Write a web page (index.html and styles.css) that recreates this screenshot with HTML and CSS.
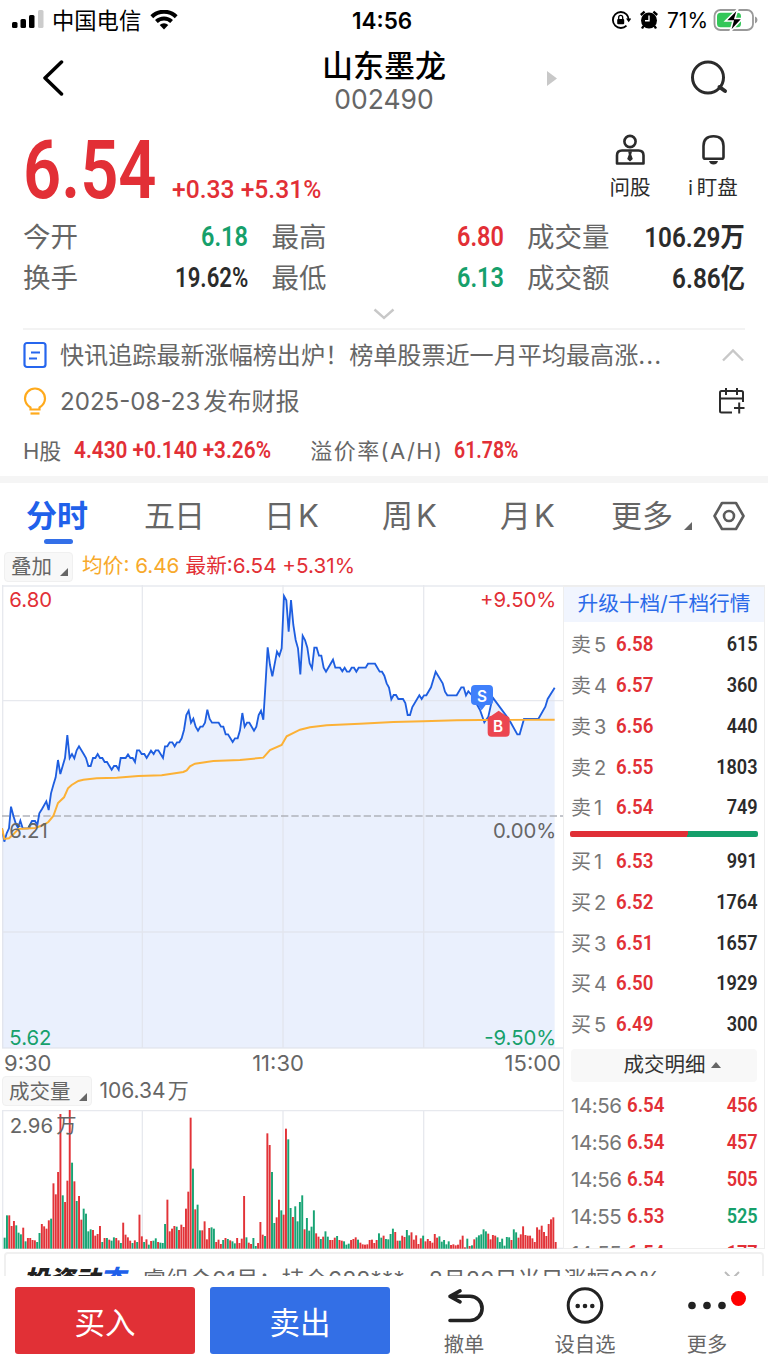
FILE: index.html
```html
<!DOCTYPE html>
<html lang="zh-CN">
<head>
  <meta charset="UTF-8">
  <meta name="viewport" content="width=device-width, initial-scale=1.0">
  <title>山东墨龙 002490</title>
  <link rel="stylesheet" href="styles.css">
</head>
<body>
  <div class="status">
    <svg class="signal" width="34" height="20" viewBox="0 0 34 20">
      <rect x="0" y="12" width="5.500" height="6" rx="1.500"/>
      <rect x="8.500" y="9" width="5.500" height="9" rx="1.500"/>
      <rect x="17" y="5" width="5.500" height="13" rx="1.500"/>
      <rect x="26" y="0" width="5.500" height="18" rx="1.500" fill="#ccc"/>
    </svg>
    <span class="carrier">中国电信</span>
    <svg class="wifi" width="28" height="20" viewBox="0 0 28 20">
      <path d="M1.800 6.700a17.400 17.400 0 0 1 24.400 0M6.400 11.500a11 11 0 0 1 15.200 0" fill="none" stroke="#000" stroke-width="4"/>
      <path d="M14 19.500l-4.300-4.500a6.200 6.200 0 0 1 8.600 0z"/>
    </svg>
    <span class="clock">14:56</span>
    <div class="status-right">
      <svg width="20" height="20" viewBox="0 0 20 20">
        <path d="M15.500 4.300A8 8 0 1 0 15.500 15.700M15.500 4.300Q17.500 6.500 17.500 9" fill="none" stroke="#000" stroke-width="1.800"/>
        <path d="M15 8.500h5.400l-2.700 3.800z"/>
        <rect x="6.200" y="9" width="7" height="5.200" rx="1"/>
        <path d="M7.700 9.500V7.400a2 2 0 0 1 4 0v2.100" fill="none" stroke="#000" stroke-width="1.300"/>
      </svg>
      <svg width="20" height="20" viewBox="0 0 20 20">
        <circle cx="10" cy="10.500" r="8"/>
        <path d="M1.800 5l3.800-3.300M18.200 5l-3.800-3.300M4.500 16l-1.500 2.500M15.500 16l1.500 2.500" stroke="#000" stroke-width="2.400"/>
        <path d="M10 5.400v5.400H6" fill="none" stroke="#fff" stroke-width="1.400"/>
      </svg>
      <span class="percent">71%</span>
      <svg width="45" height="26" viewBox="0 0 45 26">
        <rect x="1.500" y="3" width="38.500" height="20" rx="6" fill="#fff" stroke="#999" stroke-width="1.800"/>
        <rect x="4" y="5.800" width="24" height="14.500" rx="3.500" fill="#34c759"/>
        <path d="M42 9.500q2.500.8 2.500 3.500T42 16.500z" fill="#999"/>
        <path d="M25 1.500l-12.500 12.500h7.500L17 25 29.500 11.500h-7.500z" stroke="#fff" stroke-width="1.600"/>
      </svg>
    </div>
  </div>

  <div class="nav">
    <svg class="back" width="22" height="36" viewBox="0 0 22 36"><path d="M19.500 2L3 18l16.500 16" fill="none" stroke="#000" stroke-width="3.500" stroke-linecap="round" stroke-linejoin="round"/></svg>
    <div class="title">
      <h1>山东墨龙</h1>
      <p>002490</p>
    </div>
    <svg class="next" width="10" height="15" viewBox="0 0 10 15"><path d="M0 0l10 7.500L0 15z" fill="#c8c8c8"/></svg>
    <svg class="search" width="38" height="36" viewBox="0 0 38 36"><circle cx="18" cy="17.500" r="15.500" fill="none" stroke="#2b2b2b" stroke-width="3"/><path d="M29.500 27l5.500 4" stroke="#2b2b2b" stroke-width="4" stroke-linecap="round"/></svg>
  </div>

  <div class="quote">
    <span class="price">6.54</span>
    <span class="change">+0.33 +5.31%</span>
    <div class="tool ask">
      <svg width="30" height="32" viewBox="0 0 30 32" fill="none" stroke="#2b2b2b" stroke-width="2.600">
        <circle cx="15" cy="7.500" r="5.600"/>
        <path d="M2 29.500V21.500Q2 16.500 7 16.500h16.500q5 0 5 5v8z" stroke-linejoin="round"/>
        <path d="M13.200 17.500h3.800l-.8 3 1.600 4.500L15 27.500l-2.800-2.500 1.600-4.500z" fill="#2b2b2b" stroke="none"/>
      </svg>
      <span>问股</span>
    </div>
    <div class="tool watch">
      <svg width="30" height="32" viewBox="0 0 30 32">
        <path d="M5.500 23V12q0-9.800 10-9.800t10 9.800V23q0 1.800-1.800 1.800H7.300Q5.500 24.800 5.500 23z" fill="none" stroke="#2b2b2b" stroke-width="2.600"/>
        <path d="M11 27h9q-1 3.500-4.500 3.500T11 27z" fill="#2b2b2b"/>
      </svg>
      <span><small>i</small>盯盘</span>
    </div>
  </div>

  <div class="stats">
    <div class="stat"><span>今开</span><b class="green">6.18</b></div>
    <div class="stat"><span>最高</span><b class="red">6.80</b></div>
    <div class="stat"><span>成交量</span><b class="wide">106.29万</b></div>
    <div class="stat"><span>换手</span><b class="narrow">19.62%</b></div>
    <div class="stat"><span>最低</span><b class="green">6.13</b></div>
    <div class="stat"><span>成交额</span><b class="wide">6.86亿</b></div>
  </div>
  <div class="expand">
    <svg width="22" height="12" viewBox="0 0 22 12"><path d="M1.500 1.500L11 10l9.500-8.500" fill="none" stroke="#c8c8c8" stroke-width="2.400"/></svg>
  </div>

  <div class="news">
    <div class="news-row">
      <svg width="24" height="28" viewBox="0 0 24 28" fill="none" stroke="#2666ee" stroke-width="2.200">
        <rect x="1.500" y="2" width="21" height="24" rx="2.500"/>
        <path d="M8 11.500h9M6 17.500h8"/>
      </svg>
      <p>快讯追踪最新涨幅榜出炉！榜单股票近一月平均最高涨<span class="dots">...</span></p>
      <svg width="24" height="14" viewBox="0 0 24 14"><path d="M2 12.500L12 2.500l10 10" fill="none" stroke="#c8c8c8" stroke-width="2.400"/></svg>
    </div>
    <div class="news-row report">
      <svg width="24" height="28" viewBox="0 0 24 28" fill="none" stroke="#ffaa1c" stroke-width="2.200">
        <path d="M7.500 22.500v-2Q2 17 2 11.500a10 10 0 0 1 20 0q0 5.500-5.500 9v2z"/>
        <path d="M7.500 26.500h9"/>
      </svg>
      <p>2025-08-23<span class="k">发布财报</span></p>
      <svg width="27" height="28" viewBox="0 0 27 28" fill="none" stroke="#2b2b2b" stroke-width="2">
        <path d="M25 15V5.500Q25 4 23.500 4h-20Q2 4 2 5.500v18.500Q2 25.500 3.500 25.500H14"/>
        <path d="M2 11.500h23M8 1v7M19 1v7M16 21h10.500M21.200 15.500v11"/>
      </svg>
    </div>
    <div class="news-row h-share">
      <span>H股</span><b class="h-price">4.430 +0.140 +3.26%</b>
      <span class="premium">溢价率(A/H)</span><b class="h-rate">61.78%</b>
    </div>
  </div>

  <div class="tabs">
    <span class="tab active">分时</span>
    <span class="tab">五日</span>
    <span class="tab period">日<span class="k">K</span></span>
    <span class="tab period">周<span class="k">K</span></span>
    <span class="tab period">月<span class="k">K</span></span>
    <span class="tab more">更多<i class="corner"></i></span>
    <svg width="32" height="30" viewBox="0 0 32 30" fill="none" stroke="#5c5c5c" stroke-width="2.600"><path d="M9 2h14l7.500 13L23 28H9L1.500 15z" stroke-linejoin="round"/><circle cx="16" cy="15" r="5"/></svg>
  </div>

  <div class="info">
    <span class="chip">叠加<i class="corner"></i></span>
    <span class="avg">均价: 6.46</span>
    <span class="red">最新:6.54 +5.31%</span>
  </div>

  <div class="main">
    <div class="charts">
      <!-- 分时走势 -->
      <svg class="trend" viewBox="6 0 1683 1392" preserveAspectRatio="none">
        <path class="area" d=""/>
        <path class="grid" d="M8 0V1389M427 0V1389M849 0V1389M1271 0V1389M6 3H1689M6 347H1689M6 1041H1689M6 1389H1689"/>
        <path class="base" d="M6 693H1689"/>
        <polyline class="line" points="6,730 13,770 20,745 27,730 33,665 41,695 48,718 54,728 61,707 68,730 84,730 96,708 105,708 112,720 118,685 126,672 139,649 146,675 153,625 160,600 167,577 174,525 181,567 188,543 195,519 202,450 209,519 216,507 223,520 230,496 237,484 251,507 258,519 265,543 272,543 279,519 286,519 293,507 300,519 307,519 314,531 321,531 335,554 342,543 349,543 356,554 362,519 377,519 384,508 391,519 398,519 405,531 411,496 418,496 425,507 433,507 440,519 453,497 461,507 467,496 475,496 489,519 495,484 502,484 509,472 517,472 524,484 531,472 538,472 545,460 552,435 559,390 566,377 573,413 580,401 587,425 594,437 601,425 608,425 615,413 622,374 629,402 636,413 656,413 663,425 670,425 677,448 684,448 698,471 705,460 713,460 720,436 727,384 734,425 741,413 748,413 762,437 769,425 776,390 783,377 790,404 797,290 803,187 810,240 817,274 831,200 838,212 845,190 852,33 859,46 866,140 873,45 880,120 887,165 894,190 901,268 908,152 915,165 922,188 929,235 936,250 943,188 950,188 957,212 964,212 971,248 978,260 999,224 1006,248 1020,248 1027,259 1034,248 1041,260 1048,260 1055,248 1062,248 1069,260 1076,248 1097,248 1104,236 1125,236 1139,260 1146,260 1153,272 1160,295 1167,308 1174,343 1181,330 1188,330 1195,342 1209,342 1216,354 1223,390 1230,390 1237,366 1258,331 1265,342 1272,331 1279,331 1293,307 1307,260 1328,295 1335,320 1342,331 1370,331 1384,307 1391,307 1398,331 1405,319 1415,330 1440,375 1453,412 1465,395 1475,350 1480,340 1528,405 1552,448 1559,448 1572,402 1615,402 1636,365 1643,342 1664,308"/>
        <polyline class="avg-line" points="6,730 13,762 27,760 40,748 55,732 105,729 130,720 145,711 160,693 174,654 192,637 204,610 215,600 235,588 250,584 290,580 350,578 415,573 485,571 550,561 560,556 570,544 585,536 640,528 720,525 790,518 810,495 845,480 860,454 900,434 930,427 980,421 1080,416 1180,411 1270,409 1370,406 1440,405 1664,404"/>
        <path fill="#3f80fb" d="M1425 300h42q12 0 12 12v36q0 12-12 12h-10l-12 16-12-16h-8q-12 0-12-12v-36q0-12 12-12z"/>
        <text class="mark" x="1446" y="351">S</text>
        <path fill="#ec4650" d="M1474 392l22-15 22 15q11 1 11 12v39q0 12-12 12h-42q-12 0-12-12v-39q0-11 11-12z"/>
        <text class="mark" x="1494" y="442">B</text>
        <text class="red-text" x="28" y="65">6.80</text>
        <text class="red-text end" x="1669" y="65">+9.50%</text>
        <text class="gray-text" x="28" y="760">6.21</text>
        <text class="gray-text end" x="1669" y="760">0.00%</text>
        <text class="green-text" x="28" y="1381">5.62</text>
        <text class="green-text end" x="1669" y="1381">-9.50%</text>
      </svg>
      <div class="axis"><span>9:30</span><span>11:30</span><span>15:00</span></div>
      <div class="volume-head"><span class="chip">成交量<i class="corner"></i></span><span>106.34<span class="k">万</span></span></div>
      <!-- 成交量 -->
      <svg class="volume" viewBox="6 240 1683 417" preserveAspectRatio="none">
        <path class="grid" d="M8 240V656M427 240V656M849 240V656M1271 240V656M6 242H1689M6 655H1689"/>
        <g class="bars"></g>
        <text class="gray-text" x="29" y="309">2.96<tspan dx="10">万</tspan></text>
      </svg>
    </div>

    <div class="side">
      <div class="upgrade">升级十档/千档行情</div>
      <div class="book">
        <div class="order"><span>卖<span class="k">5</span></span><b class="red">6.58</b><b class="qty">615</b></div>
        <div class="order"><span>卖<span class="k">4</span></span><b class="red">6.57</b><b class="qty">360</b></div>
        <div class="order"><span>卖<span class="k">3</span></span><b class="red">6.56</b><b class="qty">440</b></div>
        <div class="order"><span>卖<span class="k">2</span></span><b class="red">6.55</b><b class="qty">1803</b></div>
        <div class="order"><span>卖<span class="k">1</span></span><b class="red">6.54</b><b class="qty">749</b></div>
      </div>
      <div class="ratio"></div>
      <div class="book">
        <div class="order"><span>买<span class="k">1</span></span><b class="red">6.53</b><b class="qty">991</b></div>
        <div class="order"><span>买<span class="k">2</span></span><b class="red">6.52</b><b class="qty">1764</b></div>
        <div class="order"><span>买<span class="k">3</span></span><b class="red">6.51</b><b class="qty">1657</b></div>
        <div class="order"><span>买<span class="k">4</span></span><b class="red">6.50</b><b class="qty">1929</b></div>
        <div class="order"><span>买<span class="k">5</span></span><b class="red">6.49</b><b class="qty">300</b></div>
      </div>
      <div class="detail-btn">成交明细<i></i></div>
      <div class="trades">
        <div class="order"><span>14:56</span><b class="red">6.54</b><b class="qty red">456</b></div>
        <div class="order"><span>14:56</span><b class="red">6.54</b><b class="qty red">457</b></div>
        <div class="order"><span>14:56</span><b class="red">6.54</b><b class="qty red">505</b></div>
        <div class="order"><span>14:55</span><b class="red">6.53</b><b class="qty green">525</b></div>
        <div class="order"><span>14:55</span><b class="red">6.54</b><b class="qty red">177</b></div>
      </div>
    </div>
  </div>

  <div class="feed-wrap">
    <div class="feed">
      <strong>投资动<em>态</em></strong>
      <p>睿组合01号：持仓688***</p>
      <p class="rise">8月20日当日涨幅20%</p>
      <svg width="16" height="10" viewBox="0 0 16 10"><path d="M1 1l7 7 7-7" fill="none" stroke="#bbb" stroke-width="2"/></svg>
    </div>
  </div>

  <div class="bottom">
    <button class="buy">买入</button>
    <button class="sell">卖出</button>
    <div class="action">
      <svg width="40" height="38" viewBox="0 0 40 38" fill="none" stroke="#222" stroke-width="3.600" stroke-linecap="round" stroke-linejoin="round"><path d="M16 3.800L6 9.300l10 5.500M8 9.300h18a12 12 0 0 1 0 24.200H6"/></svg>
      <span>撤单</span>
    </div>
    <div class="action add">
      <svg width="40" height="38" viewBox="0 0 40 38"><circle cx="20" cy="18.500" r="16.800" fill="none" stroke="#222" stroke-width="3"/><g fill="#222"><circle cx="12.700" cy="19" r="2.300"/><circle cx="20" cy="19" r="2.300"/><circle cx="27.300" cy="19" r="2.300"/></g></svg>
      <span>设自选</span>
    </div>
    <div class="action last">
      <svg width="40" height="38" viewBox="0 0 40 38" fill="#222"><circle cx="5" cy="18.500" r="3.800"/><circle cx="20" cy="18.500" r="3.800"/><circle cx="35" cy="18.500" r="3.800"/></svg>
      <span>更多</span>
      <i class="dot"></i>
    </div>
  </div>

  <script>
    // 每分钟成交量，负数为绿柱
    var volumes = [
      -33, -100, 100, 68, 83, -70, -48, -43, 63, -22, 32, 32, 26, 25, -20, -47, 74, 67, 60, 85,
      -90, 196, 163, 230, 404, -160, 140, 204, 416, -258, 202, -143, 158, 87, -120, -105, -52, -58, 56, 39,
      44, 68, -20, 32, -32, 27, -24, -34, 32, 25, -17, 78, 42, 34, 24, -17, 25, -20, 102, 37,
      -20, 28, -12, 23, -24, -31, 20, -18, -17, -74, 147, 52, 60, 68, -66, 56, 72, 65, 120, 171,
      393, -240, 118, -132, -55, 55, 82, 28, 62, -64, -60, 20, 27, 14, -26, 32, -29, 25, -22, -16,
      32, 17, 30, 158, -34, 18, 14, -32, -8, 17, 80, 42, -38, 346, 311, -230, -77, 94, 147, -115,
      102, 360, -328, -122, 95, -127, -82, -140, -160, 58, -92, -54, -66, -115, 46, 36, -29, 36, -52, -36,
      26, 26, 33, -38, 26, 24, -22, -12, -15, 26, 29, 34, -27, 18, 13, 12, 13, 26, 27, 17,
      26, -46, -33, 39, -29, -28, -44, -60, 50, 24, -24, 39, 35, -56, -40, 49, 27, 40, 14, 31,
      -39, 22, 29, 23, 18, 44, 33, -37, -21, -26, -13, -22, 11, 13, 10, 12, 27, 39, 4, -30,
      8, -10, 28, -34, -40, -43, -58, -52, 45, 28, 41, 39, -34, -20, -30, -9, -35, -34, 26, -58,
      -49, 33, 43, 67, 41, 39, 39, 31, 20, 64, 57, 69, 50, 38, 74, 88, 94, 20
    ];
    var html = '';
    for (var i = 0; i < volumes.length; i++) {
      var h = Math.abs(volumes[i]);
      html += '<rect x="' + (11 + i * 6.975).toFixed(1) + '" y="' + (656 - h) + '" width="5.8" height="' + h +
        '" fill="' + (volumes[i] < 0 ? '#17a474' : '#e23338') + '"/>';
    }
    document.querySelector('.bars').innerHTML = html;

    var points = document.querySelector('.line').getAttribute('points');
    document.querySelector('.area').setAttribute('d', 'M6 1389L' + points + 'L1664 1389Z');
  </script>
</body>
</html>
```

FILE: styles.css
```css
* {
  margin: 0;
  padding: 0;
  box-sizing: border-box;
}
body {
  width: 768px;
  height: 1366px;
  overflow: hidden;
  background: #fff;
  color: #666;
  font-family: Inter, "Noto Sans CJK SC", sans-serif;
  font-size: 21px;
}
svg {
  display: block;
  flex: none;
}
i, em {
  font-style: normal;
}
span, p, b, h1 {
  white-space: nowrap;
}
b {
  font-family: Roboto, "Noto Sans CJK SC", sans-serif;
  font-weight: 600;
  color: #2b2b2b;
}
.red {
  color: #e22f36;
}
.green {
  color: #16a06b;
}
/* 中西文之间的间隙 */
.k {
  margin-left: 3px;
}

/* 状态栏 */
.status {
  height: 40px;
  padding-left: 12px;
  display: flex;
  align-items: center;
  color: #000;
}
.carrier {
  margin: -2px 0 0 6px;
  width: 90px;
  font-size: 22.300px;
}
.wifi {
  margin-left: 8px;
}
.clock {
  margin-left: 174px;
  width: 64px;
  font-size: 22.500px;
  font-weight: 600;
}
.status-right {
  margin-left: auto;
  padding-right: 10px;
  display: flex;
  align-items: center;
  gap: 8px;
}
.percent {
  font-size: 21px;
  margin-right: -3px;
}

/* 标题 */
.nav {
  height: 80px;
  display: flex;
  align-items: center;
  padding: 0 40px 4px 42px;
}
.title {
  width: 140px;
  margin-left: 250px;
  text-align: center;
}
.title h1 {
  padding-top: 3px;
  font-size: 31px;
  font-weight: 500;
  line-height: 39px;
  color: #000;
}
.title p {
  font-size: 26.500px;
  line-height: 29px;
}
.next {
  margin-left: 93px;
}
.search {
  margin-left: auto;
}

/* 报价 */
.quote {
  height: 96px;
  padding-left: 23px;
  display: flex;
}
.price {
  width: 149px;
  font: 600 81.500px/100px Roboto, sans-serif;
  color: #e22f36;
  transform: scaleX(.82);
  transform-origin: left;
}
.change {
  width: 151px;
  margin-top: 52px;
  font: 500 26.500px/34px Roboto, sans-serif;
  color: #e22f36;
  transform: scaleX(.93);
  transform-origin: left;
}
.tool {
  width: 60px;
  padding-top: 14px;
  display: flex;
  flex-direction: column;
  align-items: center;
  font-size: 20.500px;
  line-height: 43px;
  color: #2b2b2b;
}
.tool small {
  margin-right: 4px;
  font-size: 19px;
}
.ask {
  margin-left: 277px;
}
.watch {
  margin-left: 23px;
}
.stats {
  display: grid;
  grid-template-columns: 225px 232px 218px;
  column-gap: 23.500px;
  grid-auto-rows: 41px;
  padding-left: 23px;
}
.stat {
  display: flex;
  justify-content: space-between;
  align-items: center;
  font-size: 27.500px;
}
.stat span {
  margin-top: -3px;
}
.stat b {
  font-size: 27px;
  transform: scaleX(.87);
  transform-origin: right;
}
.stat .wide {
  margin-top: -3px;
  transform: scaleX(.9);
}
.stat .narrow {
  transform: scaleX(.82);
}
.expand {
  height: 30px;
  display: flex;
  justify-content: center;
  padding-top: 10px;
}

/* 资讯 */
.news {
  height: 148px;
  margin: 0 23px;
  border-top: 2px solid #f3f3f3;
}
.news-row {
  height: 46px;
  margin-top: 2px;
  display: flex;
  align-items: center;
  font-size: 24.100px;
}
.news-row p {
  flex: 1;
  margin: -3px 0 0 13px;
}
.dots {
  letter-spacing: 1px;
}
.report {
  margin-top: 0;
}
.h-share {
  margin-top: 3px;
  font-size: 22px;
}
.h-share span {
  margin-top: -3px;
}
.h-share b {
  font-size: 23.500px;
  color: #e22f36;
  transform: scaleX(.885);
  transform-origin: left;
}
.h-price {
  margin-left: 13px;
  width: 198px;
}
.h-share .premium {
  margin-left: 38px;
  width: 134px;
  letter-spacing: 1.400px;
}
.h-rate {
  margin-left: 10px;
}
.h-share .h-rate {
  transform: scaleX(.83);
}

/* 周期切换 */
.tabs {
  height: 71px;
  border-top: 7px solid #f5f5f5;
  padding: 0 23px 0 26px;
  display: flex;
  align-items: flex-start;
  font-size: 31px;
}
.tabs svg {
  margin: 18px 0 0 auto;
}
.tab {
  position: relative;
  width: 118px;
  line-height: 65px;
  letter-spacing: -1px;
}
.period {
  padding-left: 2px;
}
.tab .k {
  margin-left: 4px;
}
.active {
  color: #2060ea;
  font-weight: 600;
  letter-spacing: 0;
}
.active::after {
  content: "";
  position: absolute;
  left: 18px;
  top: 56px;
  width: 29px;
  height: 5px;
  border-radius: 3px;
  background: #336fe8;
}
.more {
  width: 90px;
  margin-left: -5px;
  letter-spacing: 0;
}
.corner {
  display: inline-block;
  border-left: 8px solid transparent;
  border-bottom: 8px solid #666;
}
.more .corner {
  margin-left: 11px;
  vertical-align: -3px;
}

.info {
  height: 38px;
  padding: 5px 0 0 4px;
  display: flex;
  align-items: flex-start;
  font-size: 20.700px;
  line-height: 28px;
}
.chip {
  height: 30px;
  padding: 0 4px 0 6px;
  border: 1px solid #f0f0f0;
  border-radius: 4px;
  background: #f8f8f8;
  font-size: 20.500px;
}
.chip .corner {
  margin-left: 8px;
  vertical-align: -2px;
}
.avg {
  margin: 0 6px 0 9px;
  color: #f7a92b;
}

/* 图表 */
.main {
  height: 664px;
  display: flex;
  padding-left: 2px;
}
.charts {
  width: 561px;
}
.trend {
  width: 561px;
  height: 464px;
}
.grid {
  fill: none;
  stroke: #dfe2e8;
  stroke-opacity: .75;
  stroke-width: 4;
}
.base {
  stroke: #b0b3bb;
  stroke-width: 4;
  stroke-dasharray: 22 9;
}
.area {
  fill: #eaf0fd;
}
.line {
  fill: none;
  stroke: #1e5ee0;
  stroke-width: 5.500;
}
.avg-line {
  fill: none;
  stroke: #fcb136;
  stroke-width: 6;
}
text {
  font-size: 61px;
}
.red-text {
  fill: #e22f36;
}
.green-text {
  fill: #16a06b;
}
.gray-text {
  fill: #666;
}
.end {
  text-anchor: end;
}
.mark {
  font-size: 46px;
  font-weight: 600;
  fill: #fff;
  text-anchor: middle;
}
.axis {
  height: 27px;
  padding: 0 2px;
  display: flex;
  justify-content: space-between;
  font-size: 22px;
  line-height: 28px;
}
.volume-head {
  height: 34px;
  display: flex;
  gap: 8px;
  font-size: 21px;
  line-height: 29px;
}
.volume-head .k {
  margin-left: 2px;
}
.volume {
  width: 561px;
  height: 139px;
}

/* 盘口 */
.side {
  width: 202px;
  height: 664px;
  border: solid #eee;
  border-width: 2px 1px 1px;
  overflow: hidden;
}
.upgrade {
  height: 35px;
  background: #f1f5fe;
  color: #2b6ae9;
  font-size: 20.700px;
  line-height: 33px;
  text-align: center;
}
.book {
  padding-top: 2px;
}
.order {
  height: 40.750px;
  padding: 0 6px 0 7px;
  display: flex;
  align-items: center;
  font-size: 20px;
}
.order > span {
  width: 45px;
  margin-top: -1px;
  color: #777;
}
.order b {
  font-size: 20.800px;
  transform: scaleX(.9);
  transform-origin: left;
}
.order .qty {
  margin-left: auto;
  transform: scaleX(.87);
  transform-origin: right;
}
.order .red {
  color: #e22f36;
}
.order .green {
  color: #16a06b;
}
.ratio {
  height: 6px;
  margin: 3px 6px 2px;
  border-radius: 2px;
  background: linear-gradient(105deg, #e02f36 62.500%, #159f6b 62.500%);
}
.detail-btn {
  height: 33px;
  margin: 4px 7px 5px;
  padding-left: 16px;
  border-radius: 4px;
  background: #f8f8f8;
  color: #333;
  font-size: 20.500px;
  line-height: 32px;
  text-align: center;
}
.detail-btn i {
  display: inline-block;
  margin: 0 0 4px 5px;
  border: 5px solid transparent;
  border-top: 0;
  border-bottom: 6px solid #666;
}
.trades .order {
  height: 37px;
}
.trades .order > span {
  width: 56px;
  margin-top: 0;
  font-size: 20.500px;
  letter-spacing: -.4px;
}

/* 动态，底部被操作栏遮住 */
.feed-wrap {
  height: 27px;
  padding: 3px 4px 0;
  overflow: hidden;
}
.feed {
  height: 60px;
  padding: 11px 22px 0 20px;
  border: 2px solid #f0f0f0;
  border-radius: 4px;
  display: flex;
  align-items: flex-start;
  font-size: 23px;
  line-height: 30px;
}
.feed strong {
  width: 117px;
  font-size: 25.500px;
  font-weight: 900;
  font-style: italic;
  color: #222;
  text-indent: -3px;
}
.feed em {
  font-style: italic;
  color: #2060ea;
}
.rise {
  margin-left: 24px;
}
.feed svg {
  margin: 6px 0 0 auto;
}

/* 底部操作 */
.bottom {
  height: 90px;
  padding: 11px 0 0 15px;
  display: flex;
  align-items: flex-start;
}
.bottom button {
  width: 180px;
  height: 67px;
  margin-right: 15px;
  border: 0;
  border-radius: 3px;
  font: 400 30.500px/66px "Noto Sans CJK SC", sans-serif;
  color: #fff;
}
.bottom .buy {
  background: #e13036;
}
.bottom .sell {
  background: #336fe6;
}
.action {
  position: relative;
  width: 70px;
  margin-left: 24px;
  display: flex;
  flex-direction: column;
  align-items: center;
  font-size: 20.300px;
  line-height: 39px;
}
.add {
  margin-left: 51px;
}
.last {
  margin-left: 52px;
}
.dot {
  position: absolute;
  left: 59px;
  top: 4px;
  width: 15px;
  height: 15px;
  border-radius: 50%;
  background: #f00;
}
```
